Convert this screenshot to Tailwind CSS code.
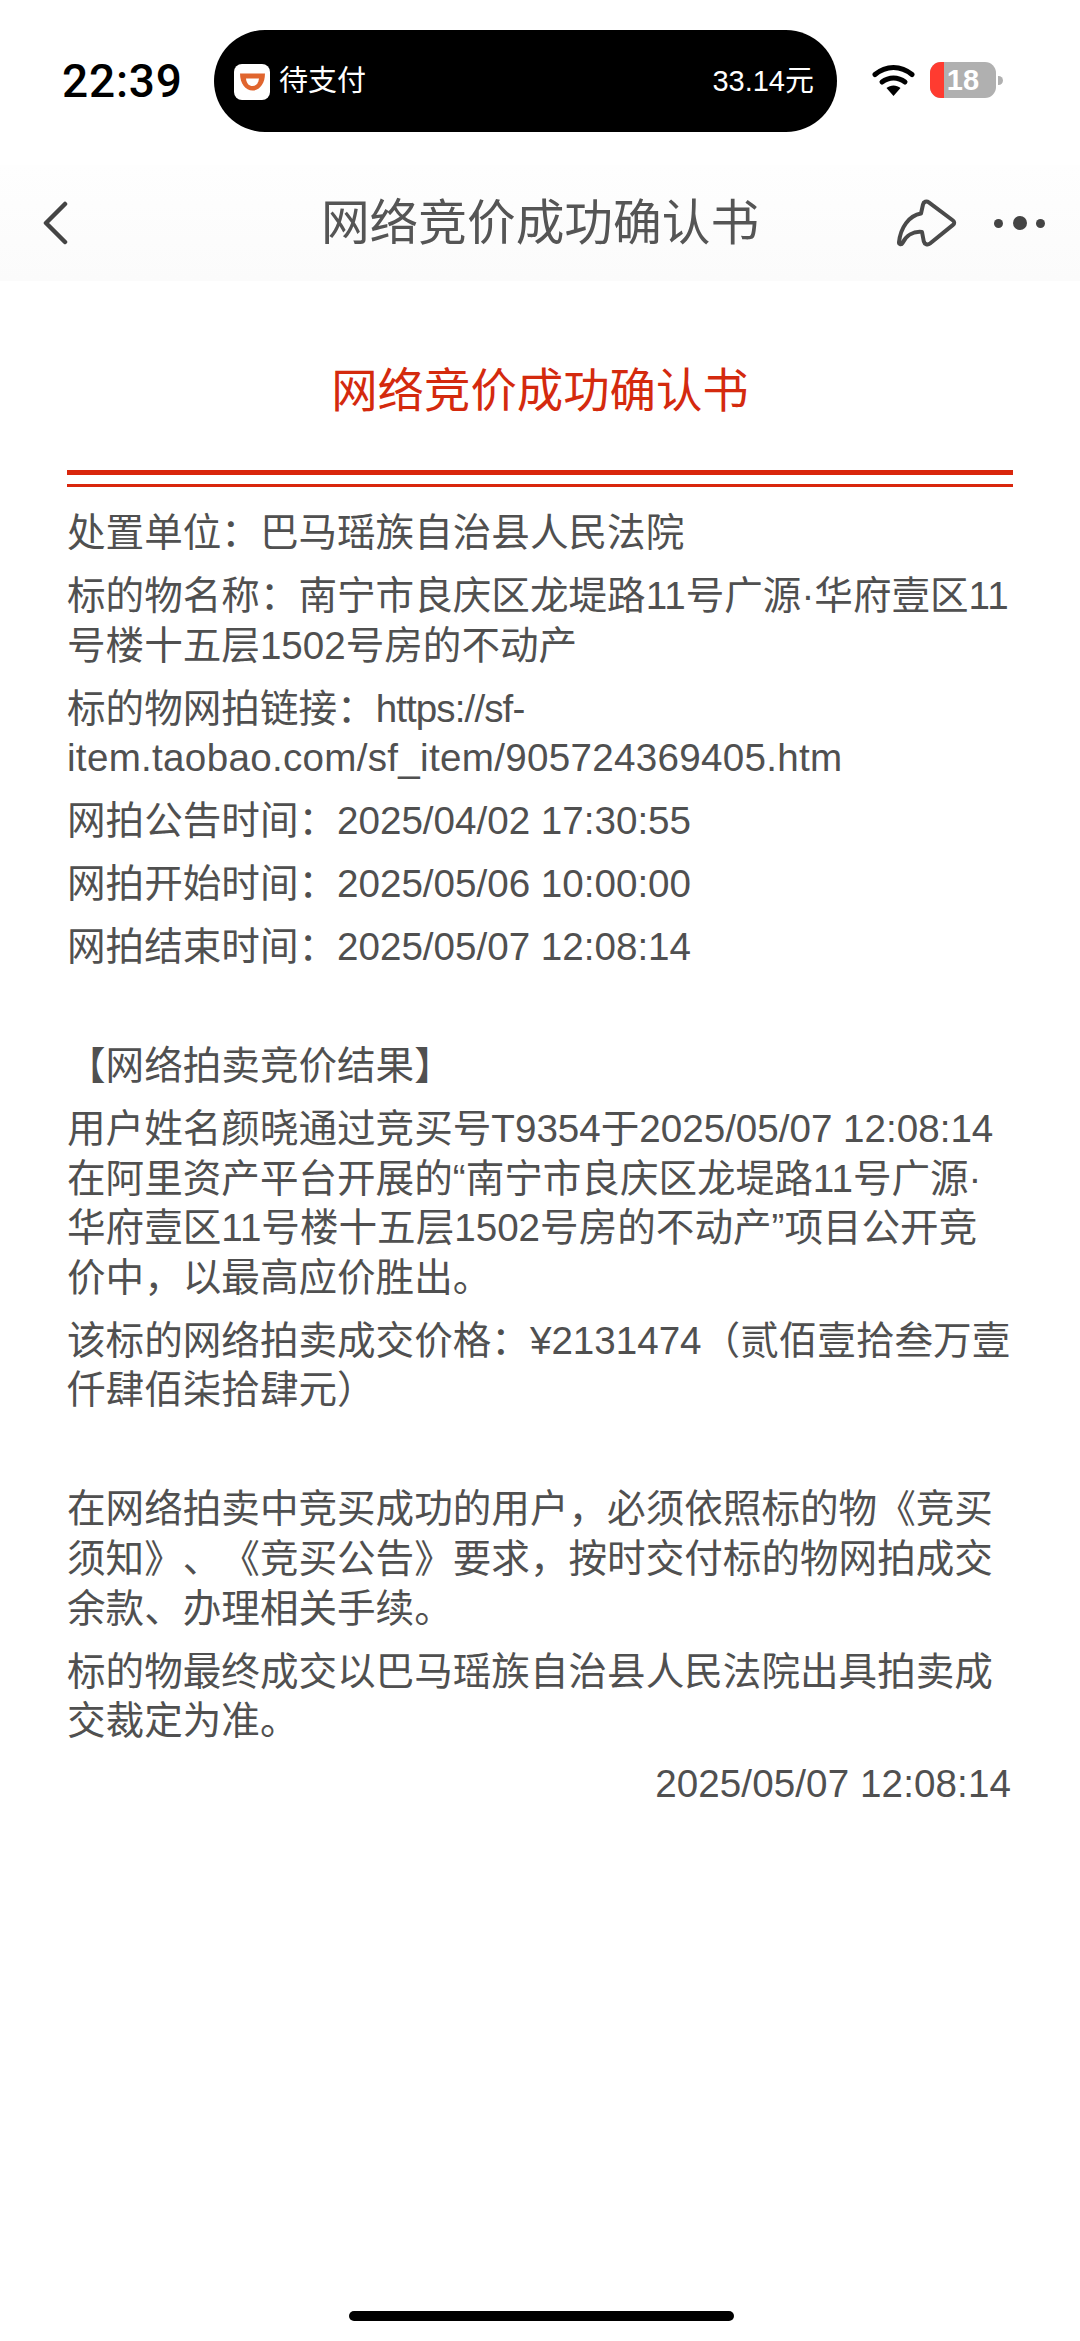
<!doctype html>
<html lang="zh-CN">

<head>
	<meta charset="utf-8" />
	<meta name="viewport" content="width=device-width, initial-scale=1" />
	<script src="https://cdn.jsdelivr.net/npm/@tailwindcss/browser@4"></script>
</head>

<body class="w-[1080px] h-[2341px] bg-white overflow-hidden flex flex-col font-['Liberation_Sans','Noto_Sans_CJK_SC',sans-serif]">

	<!-- status bar -->
	<div class="h-[165px] pt-[30px] pl-[62px] flex items-start shrink-0">
		<div class="w-[152px] h-[102px] pt-[1px] flex items-center font-['Roboto'] font-medium text-[46px] text-black tracking-[0.8px] shrink-0">22:39</div>
		<div class="w-[623px] h-[102px] bg-black rounded-[51px] flex items-center pt-[2px] pl-[20px] pr-[23px] shrink-0">
			<div class="w-[36px] h-[36px] bg-white rounded-[8px] flex items-center justify-center shrink-0">
				<svg width="27" height="20" viewBox="0 0 27 20" fill="none">
					<path d="M1 1.500h25c0 10-5.500 17-12.500 17S1 11.500 1 1.500Z" fill="#e0652e" />
					<path d="M7 6.500h13c-.5 5-3 7.500-6.500 7.500S7.500 11.500 7 6.500Z" fill="#fff" />
				</svg>
			</div>
			<span class="ml-[9px] text-[29px] text-white">待支付</span>
			<span class="ml-auto text-[29px] text-white">33.14元</span>
		</div>
		<svg class="ml-[35px] mt-[34px] shrink-0" width="43" height="32" viewBox="0 0 43 32" fill="none">
			<path d="M3 10.500C14 1 29 1 40 10.500" stroke="#000" stroke-width="5" stroke-linecap="round" />
			<path d="M10 18c7-5.500 16-5.500 23 0" stroke="#000" stroke-width="5" stroke-linecap="round" />
			<path d="M14.500 24c4-3.500 10-3.500 14 0L21.500 32Z" fill="#000" />
		</svg>
		<div class="ml-[15px] mt-[32px] flex items-center shrink-0">
			<div class="relative w-[66px] h-[36px] rounded-[11px] bg-[#b0b0b0] overflow-hidden flex items-center justify-center">
				<div class="absolute left-0 top-0 bottom-0 w-[14px] bg-[#ff3b30]"></div>
				<span class="relative text-[29px] font-bold text-white leading-none">18</span>
			</div>
			<div class="ml-[2px] w-[5px] h-[9px] rounded-r-full bg-[#b0b0b0]"></div>
		</div>
	</div>

	<!-- nav -->
	<div class="h-[116px] bg-gradient-to-b from-[#fefefe] to-[#fbfbfb] flex items-center relative shrink-0">
		<svg class="ml-[41px]" width="27" height="44" viewBox="0 0 27 44" fill="none">
			<path d="M24 3 5 22l19 19" stroke="#444" stroke-width="4.500" stroke-linecap="round" stroke-linejoin="round" />
		</svg>
		<div class="absolute inset-x-0 top-[28px] text-center text-[48.700px] leading-[60px] text-[#555]">网络竞价成功确认书</div>
		<svg class="ml-auto" width="60" height="48" viewBox="0 0 60 48" fill="none">
			<path d="M24 14.500 26 5.500c.6-2.800 3.500-3.800 5.800-2.200L56 21.500c1.600 1.200 1.600 3.200 0 4.400L33 44.500c-2.300 1.800-5.500.8-6.200-2L25 33C16 32 9 37 5.500 44c-1 2-3.700 1.500-3.500-.7C3.500 28.500 12 16.500 24 14.500Z" stroke="#4a4a4a" stroke-width="4" stroke-linejoin="round" />
		</svg>
		<div class="ml-[37px] mr-[35px] flex items-center gap-[9.500px]">
			<div class="w-[9px] h-[9px] rounded-full bg-[#444]"></div>
			<div class="w-[14px] h-[14px] rounded-full bg-[#444]"></div>
			<div class="w-[9px] h-[9px] rounded-full bg-[#444]"></div>
		</div>
	</div>

	<!-- content -->
	<div class="flex-1 bg-white px-[67px] relative">
		<h1 class="mt-[80px] h-[60px] text-center text-[46.400px] leading-[60px] font-normal text-[#d42a0e]">网络竞价成功确认书</h1>
		<div class="mt-[49px] h-[5px] bg-[#d9260c]"></div>
		<div class="mt-[9px] h-[3px] bg-[#d9260c]"></div>

		<div class="mt-[21px] text-[38.600px] leading-[49.600px] text-[#505050] [text-spacing-trim:space-all]">
			<p class="mb-[13.400px]">处置单位：巴马瑶族自治县人民法院</p>
			<p class="mb-[13.400px]">标的物名称：南宁市良庆区龙堤路11号广源·华府壹区11<br />号楼十五层1502号房的不动产</p>
			<p class="mb-[13.400px]">标的物网拍链接：<span class="tracking-[-0.9px]">https://sf-</span><br /><span class="tracking-[0.3px]">item.taobao.com/sf_item/905724369405.htm</span></p>
			<p class="mb-[13.400px]">网拍公告时间：2025/04/02 17:30:55</p>
			<p class="mb-[13.400px]">网拍开始时间：2025/05/06 10:00:00</p>
			<p class="mb-[69.400px]">网拍结束时间：2025/05/07 12:08:14</p>
			<p class="mb-[13.400px]">【网络拍卖竞价结果】</p>
			<p class="mb-[13.400px]">用户姓名颜晓通过竞买号T9354于2025/05/07 12:08:14<br />在阿里资产平台开展的“南宁市良庆区龙堤路11号广源·<br />华府壹区11号楼十五层1502号房的不动产”项目公开竞<br />价中，以最高应价胜出。</p>
			<p class="mb-[69.400px]">该标的网络拍卖成交价格：¥2131474（贰佰壹拾叁万壹<br />仟肆佰柒拾肆元）</p>
			<p class="mb-[13.400px]">在网络拍卖中竞买成功的用户，必须依照标的物《竞买<br />须知》、《竞买公告》要求，按时交付标的物网拍成交<br />余款、办理相关手续。</p>
			<p class="mb-[13.400px]">标的物最终成交以巴马瑶族自治县人民法院出具拍卖成<br />交裁定为准。</p>
			<p class="text-right pr-[2px] tracking-[0.1px]">2025/05/07 12:08:14</p>
		</div>

		<div class="absolute left-[349px] top-[2030px] w-[385px] h-[10px] rounded-full bg-black"></div>
	</div>

</body>

</html>
